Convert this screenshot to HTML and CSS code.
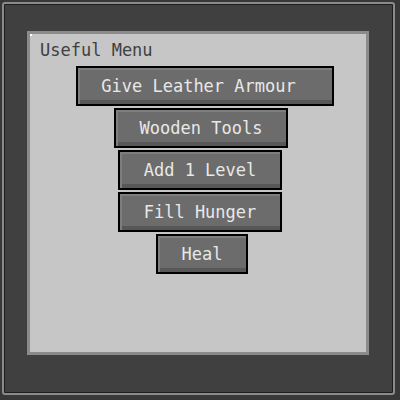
FILE: index.html
```html
<!DOCTYPE html>
<html>
<head>
<meta charset="utf-8">
<link rel="stylesheet" href="styles.css">
</head>
<body>
<div class="screen">
  <div class="frame">
    <div class="panel">
      <div class="title">Useful Menu</div>
      <div class="menu">
        <div class="btn btn-armour">Give Leather Armour</div>
        <div class="btn btn-tools">Wooden Tools</div>
        <div class="btn btn-level">Add 1 Level</div>
        <div class="btn btn-hunger">Fill Hunger</div>
        <div class="btn btn-heal">Heal</div>
      </div>
    </div>
  </div>
</div>
</body>
</html>
```
FILE: styles.css
```css
html, body {
  margin: 0;
  padding: 0;
  background: #383838;
}
.screen {
  width: 400px;
  height: 400px;
  box-sizing: border-box;
  padding: 2px 5px 5px 2px;
  background: #383838;
}
.frame {
  height: 100%;
  box-sizing: border-box;
  border: 2px solid #8b8b8b;
  border-radius: 3px;
  background: #404040;
  box-shadow: inset 0 0 0 1px #1e1e1e;
  padding: 27px 0 0 23px;
}
.panel {
  position: relative;
  width: 342px;
  height: 324px;
  box-sizing: border-box;
  border: 3px solid #8b8b8b;
  background: #c6c6c6;
  padding: 6px 0 0 10px;
  font-family: "DejaVu Sans Mono", monospace;
}
.panel::before {
  content: "";
  position: absolute;
  left: 0;
  top: 0;
  width: 2px;
  height: 2px;
  background: #ffffff;
}
.title {
  font-size: 17px;
  line-height: 20px;
  color: #404040;
}
.menu {
  display: flex;
  flex-direction: column;
  align-items: flex-start;
  gap: 2px;
  margin-top: 6px;
}
.btn {
  height: 40px;
  box-sizing: border-box;
  border: 2px solid #000;
  background: #6c6c6c;
  box-shadow: inset 2px 2px 0 #7e7e7e, inset 0 -4px 0 #575757;
  color: #e8e8e8;
  font-size: 17px;
  line-height: 36px;
  text-align: center;
  white-space: nowrap;
}
.btn-armour { width: 258px; margin-left: 36px; padding-right: 13px; }
.btn-tools { width: 174px; margin-left: 74px; }
.btn-level { width: 164px; margin-left: 78px; }
.btn-hunger { width: 164px; margin-left: 78px; }
.btn-heal { width: 92px; margin-left: 116px; }
```
